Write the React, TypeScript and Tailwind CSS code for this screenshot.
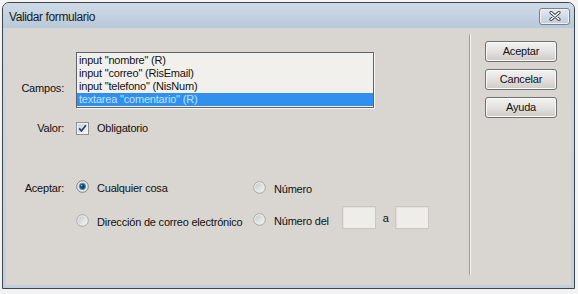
import React from "react";

const font = "font-['Liberation_Sans',Arial,sans-serif]";

const Radio: React.FC<{ checked?: boolean }> = ({ checked }) => (
  <svg width="13" height="13" viewBox="0 0 13 13" className="shrink-0">
    <defs>
      <linearGradient id={checked ? "rg1" : "rg0"} x1="0" y1="0" x2="1" y2="1">
        <stop offset="0" stopColor="#c9c9c9" />
        <stop offset="1" stopColor="#f4f4f4" />
      </linearGradient>
    </defs>
    <circle cx="6.5" cy="6.5" r="5.8" fill="#ececec" stroke={checked ? "#7d7f82" : "#a7a7a7"} strokeWidth="1" />
    <circle cx="6.5" cy="6.5" r="4.3" fill={`url(#${checked ? "rg1" : "rg0"})`} />
    {checked && (
      <>
        <circle cx="6.5" cy="6.5" r="3.4" fill="#3b86b5" />
        <circle cx="6.5" cy="6.5" r="2.4" fill="#163f5e" />
        <circle cx="5.7" cy="5.6" r="0.9" fill="#6fb3dc" />
      </>
    )}
  </svg>
);

const Checkbox: React.FC = () => (
  <svg width="13" height="13" viewBox="0 0 13 13" className="shrink-0">
    <defs>
      <linearGradient id="cb" x1="0" y1="0" x2="1" y2="1">
        <stop offset="0" stopColor="#cdd3db" />
        <stop offset="1" stopColor="#f3f4f6" />
      </linearGradient>
    </defs>
    <rect x="0.5" y="0.5" width="12" height="12" fill="#f4f4f4" stroke="#8e8f91" />
    <rect x="2" y="2" width="9" height="9" fill="url(#cb)" />
    <path d="M3.2 6.4 L5.4 9 L9.9 3.2" fill="none" stroke="#2c3e63" strokeWidth="1.7" strokeLinejoin="round" />
  </svg>
);

const DlgButton: React.FC<{ label: string }> = ({ label }) => (
  <button className="w-[72px] h-[21px] rounded-[3px] border border-[#707070] bg-gradient-to-b from-[#f3f3f3] via-[#e4e2df] to-[#cdcac6] shadow-[inset_0_0_0_1px_#fbfbfb] text-[11px] leading-[13px] text-[#111] tracking-[-0.2px]">
    {label}
  </button>
);

const NumBox: React.FC = () => (
  <div className="w-[34px] h-[23px] border border-[#c9c7c4] bg-[#efedea] shadow-[inset_1px_1px_0_#e2e0dd]" />
);

const fields = [
  'input "nombre" (R)',
  'input "correo" (RisEmail)',
  'input "telefono" (NisNum)',
  'textarea "comentario" (R)',
];

export default function App() {
  return (
    <div className={`w-[578px] h-[294px] bg-[#f3f3f3] pt-[2px] pl-[2px] ${font}`}>
      <div className="w-[573px] h-[287px] border border-[#3d444c] rounded-t-[7px] bg-gradient-to-b from-[#cbd7e4] to-[#c2cfdd] flex flex-col px-[3px] pb-[3px]">
        {/* Title bar */}
        <div className="h-[25px] flex items-center justify-between pl-[6px] pr-[1px] bg-gradient-to-b from-[#cfdae6] to-[#b9c9da] -mx-[3px] px-[9px] pr-[4px] rounded-t-[6px]">
          <span className="text-[12px] tracking-[-0.4px] text-[#1b1b1b] pt-[2px]">Validar formulario</span>
          <div className="w-[31px] h-[17px] mt-[1px] rounded-[3px] border border-[#76838f] bg-gradient-to-b from-[#e3e9f0] to-[#c2cedb] shadow-[inset_0_0_0_1px_#eef2f6] flex items-center justify-center">
            <svg width="12" height="10" viewBox="0 0 12 10">
              <path d="M2 1.5 L10 8.5 M10 1.5 L2 8.5" stroke="#3b434c" strokeWidth="3.2" strokeLinecap="round" />
              <path d="M2 1.5 L10 8.5 M10 1.5 L2 8.5" stroke="#ffffff" strokeWidth="1.5" strokeLinecap="round" />
            </svg>
          </div>
        </div>

        {/* Body */}
        <div className="flex-1 bg-[#d9d5d0] flex text-[11px] leading-[13px] tracking-[-0.2px] text-[#111]">
          <div className="flex-1 flex flex-col">
            {/* Campos */}
            <div className="flex items-start mt-[24px]">
              <div className="w-[58px] text-right mt-[30px]">Campos:</div>
              <div className="ml-[12px] w-[298px] h-[56px] border border-[#5f6266] bg-[#f2f0ed] py-[1px] shadow-[1px_1px_0_#f7f7f7]">
                {fields.map((f, i) => (
                  <div
                    key={f}
                    className={`h-[13px] pl-[2px] whitespace-nowrap ${i === 3 ? "bg-[#3190ee] text-[#bfe2ff]" : ""}`}>
                    {f}
                  </div>
                ))}
              </div>
            </div>

            {/* Valor */}
            <div className="flex items-center mt-[14px]">
              <div className="w-[58px] text-right">Valor:</div>
              <div className="ml-[12px] flex items-center gap-[8px]">
                <Checkbox />
                <span>Obligatorio</span>
              </div>
            </div>

            {/* Aceptar */}
            <div className="flex items-start mt-[45px]">
              <div className="w-[58px] text-right mt-[2px]">Aceptar:</div>
              <div className="ml-[12px] w-[177px] flex items-start gap-[8px]">
                <Radio checked />
                <span className="mt-[2px]">Cualquier cosa</span>
              </div>
              <div className="flex items-start gap-[8px] mt-[1px]">
                <Radio />
                <span className="mt-[2px]">Número</span>
              </div>
            </div>

            <div className="flex items-start mt-[10px]">
              <div className="w-[58px]" />
              <div className="ml-[12px] w-[177px] flex items-start gap-[8px] mt-[8px]">
                <Radio />
                <span className="mt-[2px] whitespace-nowrap">Dirección de correo electrónico</span>
              </div>
              <div className="flex items-start gap-[8px] mt-[7px]">
                <Radio />
                <span className="mt-[2px]">Número del</span>
              </div>
              <div className="ml-[13px]">
                <NumBox />
              </div>
              <span className="ml-[7px] mt-[6px]">a</span>
              <div className="ml-[6px]">
                <NumBox />
              </div>
            </div>
          </div>

          {/* Separator */}
          <div className="w-[2px] mt-[7px] mb-[10px] border-l border-l-[#9c9a97] border-r border-r-[#f8f8f8]" />

          {/* Buttons */}
          <div className="w-[100px] pl-[14px] pt-[13px] flex flex-col gap-[7px]">
            <DlgButton label="Aceptar" />
            <DlgButton label="Cancelar" />
            <DlgButton label="Ayuda" />
          </div>
        </div>
      </div>
    </div>
  );
}
